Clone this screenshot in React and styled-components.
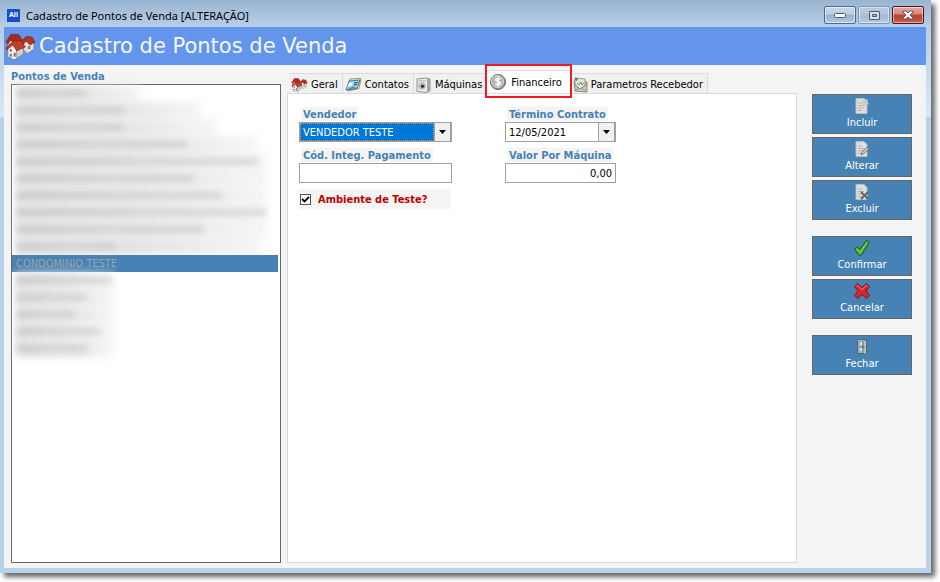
import React, { useState } from 'react';
import styled, { createGlobalStyle } from 'styled-components';

const GlobalStyle = createGlobalStyle`
    * {
        box-sizing: border-box;
    }
    body {
        margin: 0;
        background: #fff;
        font-family: "DejaVu Sans Condensed", "DejaVu Sans", sans-serif;
        font-size: 11px;
        color: #000;
    }
    button, input, select {
        font: inherit;
        margin: 0;
    }
`;

// window frame
const WindowFrame = styled.div`
    display: flex;
    flex-direction: column;
    min-height: calc(100vh - 9px);
    margin: 0 9px 9px 0;
    padding: 0 5px 5px 4px;
    background: linear-gradient(#9ab5d1 0, #b7cfe7 27px, #d9e7f5 117px, #b9d1ea 117px);
    box-shadow: 4px 4px 5px rgba(0, 0, 0, 0.6);
`;

const TitleBar = styled.div`
    display: flex;
    align-items: center;
    height: 27px;
    padding: 3px 2px 0 3px;
    font-family: "Noto Sans", "Open Sans", sans-serif;
    font-size: 11px;
`;

const AppBadge = styled.span`
    width: 13px;
    height: 13px;
    margin-right: 6px;
    background: #1450c8;
    color: #fff;
    font-size: 7px;
    font-weight: 700;
    line-height: 12px;
    text-align: center;
`;

const TitleText = styled.span`
    flex: 1;
`;

const WindowButtons = styled.div`
    display: flex;
    gap: 2px;
`;

const WindowButton = styled.button`
    display: flex;
    align-items: center;
    justify-content: center;
    width: 32px;
    height: 18px;
    padding: 0;
    border: 1px solid ${(props) => (props.$close ? '#4a1420' : props.$soft ? '#8097b3' : '#53698a')};
    border-radius: 2px;
    box-shadow: inset 0 0 0 1px rgba(255, 255, 255, 0.5);
    background: ${(props) =>
        props.$close
            ? 'linear-gradient(#e5aaa0 0, #d68376 45%, #b8402b 50%, #c9604a 100%)'
            : props.$soft
            ? 'linear-gradient(#b6cbe2 0, #b0c7df 45%, #a1bbd8 50%, #b3cbe5 100%)'
            : 'linear-gradient(#c6d8eb 0, #bccfe5 45%, #96b2d2 50%, #b3cde8 100%)'};
`;

const Header = styled.header`
    display: flex;
    align-items: center;
    gap: 3px;
    height: 38px;
    padding-left: 1px;
    background: #6495ed;
`;

const HeaderTitle = styled.h1`
    margin: 0;
    color: #f4f8ff;
    font-family: "DejaVu Sans", sans-serif;
    font-size: 21px;
    font-weight: 400;
    line-height: 24px;
`;

const Body = styled.div`
    display: flex;
    flex: 1;
    padding: 0 14px 5px 7px;
    background: #f4f4f4;
`;

// left list
const Sidebar = styled.section`
    display: flex;
    flex-direction: column;
    width: 270px;
    margin-right: 6px;
`;

const SidebarTitle = styled.h2`
    margin: 0;
    padding-top: 5px;
    height: 19px;
    color: #4682b4;
    font-size: 11px;
    line-height: 14px;
`;

const PointList = styled.ul`
    flex: 1;
    margin: 0;
    padding: 0 2px 0 0;
    border: 1px solid #666;
    background: #fff;
    list-style: none;
`;

const PointItem = styled.li`
    height: 17px;
    padding-left: 4px;
    line-height: 17px;
    color: #a0a0a4;
`;

// stays above the haze of the rows next to it
const SelectedItem = styled(PointItem)`
    position: relative;
    background: #4682b4;
`;

const Haze = styled.div`
    height: 17px;
    width: ${(props) => props.$w}px;
    max-width: 100%;
    background: linear-gradient(to right, #dcdcdc 0, #e2e2e2 50%, rgba(236, 236, 236, 0.5) 100%);
    filter: blur(4px);
`;

const HazeText = styled.div`
    height: 7px;
    width: ${(props) => props.$w}px;
    margin-top: -12px;
    background: linear-gradient(to right, #bbb, #c4c4c4 40%, #ccc 50%, #bdbdbd);
    filter: blur(3px);
    opacity: 0.5;
`;

// tabs
const Main = styled.main`
    display: flex;
    flex: 1;
    flex-direction: column;
    min-width: 0;
    margin-right: 15px;
`;

const Tabs = styled.div`
    display: flex;
    align-items: flex-end;
    height: 28px;
    padding-left: 2px;
`;

const Tab = styled.button`
    display: flex;
    align-items: center;
    gap: 3px;
    height: 20px;
    padding: 2px 4px 0 2px;
    border: 0;
    border-top: 1px solid #dcdcdc;
    border-right: 1px solid #dcdcdc;
    background: #f0f0f0;
    color: #000;
    white-space: nowrap;
`;

const ActiveTab = styled(Tab)`
    position: relative;
    gap: 4px;
    height: 23px;
    padding: 0 8px 0 2px;
    background: #fff;

    &::after {
        content: "";
        position: absolute;
        inset: -7px -2px -5px -2px;
        border: 2px solid #ed1c24;
    }
`;

const Panel = styled.div`
    flex: 1;
    padding: 13px 11px;
    border: 1px solid #d9d9d9;
    background: #fff;
`;

// form
const Form = styled.form`
    display: grid;
    grid-template-columns: 153px 111px;
    column-gap: 53px;
    row-gap: 6px;
`;

const Label = styled.label`
    display: block;
    width: max-content;
    height: 15px;
    margin-left: 2px;
    padding: 0 2px;
    background: linear-gradient(#f4f4f4 14px, #fff 14px);
    color: #4682b4;
    font-weight: 700;
    line-height: 16px;
    white-space: nowrap;
`;

const Combo = styled.div`
    display: flex;
    height: 20px;
    border: 1px solid #a0a0a0;
    background: #fff;
`;

const Select = styled.select`
    flex: 1;
    min-width: 0;
    padding: 0 2px;
    appearance: none;
    border: 1px dotted #e8963c;
    border-radius: 0;
    outline: 0;
    background: #0078d7;
    color: #fff;
`;

const DateInput = styled.input`
    flex: 1;
    min-width: 0;
    padding: 0 3px;
    border: 0;
    background: transparent;
`;

const ArrowButton = styled.button`
    display: flex;
    align-items: center;
    justify-content: center;
    width: 17px;
    padding: 0;
    border: 1px solid #a0a0a0;
    border-width: 0 1px 0 1px;
    background: #f0f0f0;
`;

const TextInput = styled.input`
    display: block;
    width: 100%;
    height: 20px;
    padding: 0 3px;
    border: 1px solid #a0a0a0;
    background: #fff;
    text-align: ${(props) => (props.$right ? 'right' : 'left')};
`;

const CheckRow = styled.label`
    display: flex;
    align-items: center;
    gap: 7px;
    height: 20px;
    margin-right: 2px;
    padding-left: 1px;
    background: #f4f4f4;
    color: #c00000;
    font-weight: 700;
    white-space: nowrap;
`;

const CheckBox = styled.input`
    width: 11px;
    height: 11px;
    appearance: none;
    border: 1px solid #555;
    background: #fff;

    &:checked {
        background: #fff url("data:image/svg+xml,%3Csvg xmlns='http://www.w3.org/2000/svg' viewBox='0 0 9 9'%3E%3Cpath d='M1 4l2.500 2.500L8 2' fill='none' stroke='black' stroke-width='1.800'/%3E%3C/svg%3E");
    }
`;

// right buttons
const Actions = styled.aside`
    display: flex;
    flex-direction: column;
    gap: 16px;
    width: 100px;
    padding-top: 29px;
`;

const ActionGroup = styled.div`
    display: flex;
    flex-direction: column;
    gap: 3px;
`;

const ActionButton = styled.button`
    display: flex;
    flex-direction: column;
    align-items: center;
    gap: 2px;
    height: 40px;
    padding: 3px 0 0;
    border: 1px solid #666;
    background: #4682b4;
    color: #fff;
    line-height: 14px;
`;

const HousesIcon = ({ width, height }) => (
    <svg width={width} height={height} viewBox="0 0 32 27">
        <path d="M3 7l9 1 5 3v7l-8 3-6-3z" fill="#ece8e2" stroke="#77665c" strokeWidth=".6" />
        <path d="M1 9l5-8 8 0 4 6-7 4-5-4-3 4z" fill="#a82c1c" stroke="#5c1a12" strokeWidth=".6" />
        <path d="M19 9l5-5 6 6v6l-7 5-4-4z" fill="#e2ddd7" stroke="#77665c" strokeWidth=".6" />
        <path d="M17 8l5-5 6 1 3 5-5 3-4-4-3 3z" fill="#b63322" stroke="#5c1a12" strokeWidth=".6" />
        <path d="M3 14l5-4 5 7v9l-4 1-6-3z" fill="#f6f4f0" stroke="#77665c" strokeWidth=".6" />
        <path d="M12 17l7-3v7l-7 5z" fill="#d8d0c8" stroke="#77665c" strokeWidth=".6" />
        <path d="M1 15l7-7 8-1 5 7-9 4-4-6-6 5z" fill="#c53d28" stroke="#651b12" strokeWidth=".6" />
        <path d="M5 16h2v3H5zM5 21h2v3H5zM9 20h2v4H9zM24 13h2v3h-2z" fill="#6b6b72" />
    </svg>
);

const ContactsIcon = () => (
    <svg width="17" height="16" viewBox="0 0 17 16">
        <path d="M5 2l11-.500-2 10L3 14z" fill="#f5eccb" stroke="#8c7b4b" strokeWidth=".8" />
        <path d="M4 4l11-1-3 8.500L1 13z" fill="#9fd0ea" stroke="#315d82" strokeWidth=".8" />
        <path d="M4 6l4-.500-1.500 3.500-4 .500z" fill="#eef8fd" />
        <path d="M9 6l4-.500M8.500 8l3.500-.500" stroke="#244c74" />
        <path d="M1.500 12.500L8 9.500l4 1.500z" fill="#5585ad" />
    </svg>
);

const MachineIcon = () => (
    <svg width="16" height="16" viewBox="0 0 16 16">
        <path d="M1 2l9-1 4 1v12l-4 1.500-9-1z" fill="#eee" stroke="#777" strokeWidth=".8" />
        <path d="M11 1.500l3 1v11l-3 1.500z" fill="#a6a6a6" />
        <path d="M2 4h8" stroke="#aaa" />
        <circle cx="6" cy="9" r="3.200" fill="#c8d7e2" stroke="#999" strokeWidth=".8" />
        <circle cx="6.500" cy="9.200" r="1.800" fill="#2e3640" />
    </svg>
);

const CoinIcon = () => (
    <svg width="18" height="18" viewBox="0 0 18 18">
        <circle cx="9" cy="9" r="7.500" fill="#8f8f8f" stroke="#6a6a6a" />
        <circle cx="8.500" cy="8.500" r="6" fill="#b4b4b4" stroke="#dedede" />
        <path d="M11.500 6.500c-1-2-5-1.500-5 .300s5 1.400 5 3.300-4 2.400-5 .400M9 3.500v10" fill="none" stroke="#fff" strokeWidth="1.500" />
    </svg>
);

const EnvelopeIcon = () => (
    <svg width="15" height="16" viewBox="0 0 15 16">
        <path d="M1 4l13 1v10L2 14z" fill="#c9c9c3" stroke="#74746c" strokeWidth=".8" />
        <path d="M2 1l10 1v7l-5 3-5-4z" fill="#e6e8db" stroke="#83857a" strokeWidth=".8" />
        <path d="M2 1h3L4 4 2 3z" fill="#6d7468" />
        <path d="M4 6l2 2 2-3 1 3 2-2" fill="none" stroke="#6f8f5b" />
        <path d="M1 7l6 5 7-5M2 14l4-4M14 15l-5-4" fill="none" stroke="#8a8a82" strokeWidth=".8" />
    </svg>
);

const DocIcon = ({ mark }) => (
    <svg width="16" height="16" viewBox="0 0 16 16">
        <path d="M2 .500h8l3 3v12H2z" fill="#dedede" stroke="#b8bdc0" />
        <path d="M4 5h4M4 7.500h6M4 10h6M4 12.500h4" stroke="#b4b4b4" />
        {mark === 'new' && <path d="M10 0l1 2 3-1-1 3 2 1-2 2v2l-3-2-2 1 1-3-2-2 3-1z" fill="#c8cccd" />}
        {mark === 'edit' && <path d="M7 14l1-3 5-5 2 2-6 5z" fill="#c9c9c9" stroke="#666" strokeWidth=".8" />}
        {mark === 'delete' && <path d="M7 8l7 7M14 8l-7 7" stroke="#666" strokeWidth="2" />}
    </svg>
);

const CheckIcon = () => (
    <svg width="16" height="16" viewBox="0 0 16 16">
        <path d="M.500 9L3.500 7 6 9.500 12.500.500 15.500 2 7 15.500H5.500z" fill="#55b52a" stroke="#1c5a16" />
        <path d="M2.500 9L6 12.500 13 2.500" fill="none" stroke="#8fdc58" />
    </svg>
);

const CrossIcon = () => (
    <svg width="16" height="16" viewBox="0 0 16 16">
        <path d="M3.500.500L8 4.500 12.500.500l3 3L12 8l3.500 4.500-3 3L8 11.500l-4.500 4-3-3L4 8 .500 3.500z" fill="#d9252b" stroke="#821319" />
        <path d="M2.500 3.500l1-1L8 6.500l4.500-4 1 1" fill="none" stroke="#f27676" />
    </svg>
);

const DoorIcon = () => (
    <svg width="16" height="16" viewBox="0 0 16 16">
        <path d="M3.500.500h9v14h-9z" fill="#e4edf2" stroke="#56646e" />
        <path d="M4 1h6.500v13H4z" fill="#a4bccb" />
        <path d="M5 2.500h3.500V7H5zM5 8.500h3.500V13H5z" fill="#cfdde6" stroke="#6f8795" strokeWidth=".7" />
        <path d="M10 1l2 1v13.500L10 14z" fill="#f2f6f8" stroke="#56646e" strokeWidth=".7" />
        <path d="M8.500 8h2" stroke="#333" />
    </svg>
);

const ArrowIcon = () => (
    <svg width="7" height="4" viewBox="0 0 7 4">
        <path d="M0 0h7L3.500 4z" fill="#000" />
    </svg>
);

const hiddenBefore = [
    { haze: 125, text: 68 },
    { haze: 185, text: 108 },
    { haze: 200, text: 106 },
    { haze: 240, text: 170 },
    { haze: 250, text: 242 },
    { haze: 250, text: 178 },
    { haze: 250, text: 206 },
    { haze: 252, text: 250 },
    { haze: 250, text: 188 },
    { haze: 245, text: 100 },
];

const hiddenAfter = [
    { haze: 98, text: 96 },
    { haze: 98, text: 70 },
    { haze: 98, text: 58 },
    { haze: 98, text: 84 },
    { haze: 98, text: 72 },
];

const HiddenItem = ({ item }) => (
    <PointItem>
        <Haze $w={item.haze} />
        <HazeText $w={item.text} />
    </PointItem>
);

const App = () => {
    const [vendor, setVendor] = useState('VENDEDOR TESTE');
    const [endDate, setEndDate] = useState('12/05/2021');
    const [code, setCode] = useState('');
    const [value, setValue] = useState('0,00');
    const [isTest, setIsTest] = useState(true);

    return (
        <>
            <GlobalStyle />
            <WindowFrame>
                <TitleBar>
                    <AppBadge>All</AppBadge>
                    <TitleText>Cadastro de Pontos de Venda [ALTERAÇÃO]</TitleText>
                    <WindowButtons>
                        <WindowButton aria-label="Minimizar">
                            <svg width="12" height="6" viewBox="0 0 12 6">
                                <rect x=".500" y="1.500" width="11" height="4" rx="1" fill="#fff" stroke="#555a6c" />
                            </svg>
                        </WindowButton>
                        <WindowButton $soft aria-label="Maximizar">
                            <svg width="11" height="9" viewBox="0 0 11 9">
                                <path d="M.500.500h10v8H.500zM3.500 3.500v2h4v-2z" fill="#dcdfe4" fillRule="evenodd" stroke="#555a6c" />
                            </svg>
                        </WindowButton>
                        <WindowButton $close aria-label="Fechar janela">
                            <svg width="12" height="10" viewBox="0 0 12 10">
                                <path d="M1 1h3l2 2 2-2h3v1L8 5l3 3v1H8L6 7 4 9H1V8l3-3-3-3z" fill="#fff" stroke="#555a6c" />
                            </svg>
                        </WindowButton>
                    </WindowButtons>
                </TitleBar>
                <Header>
                    <HousesIcon width={31} height={27} />
                    <HeaderTitle>Cadastro de Pontos de Venda</HeaderTitle>
                </Header>
                <Body>
                    <Sidebar>
                        <SidebarTitle>Pontos de Venda</SidebarTitle>
                        <PointList>
                            {hiddenBefore.map((item, i) => (
                                <HiddenItem key={i} item={item} />
                            ))}
                            <SelectedItem>CONDOMINIO TESTE</SelectedItem>
                            {hiddenAfter.map((item, i) => (
                                <HiddenItem key={i} item={item} />
                            ))}
                        </PointList>
                    </Sidebar>
                    <Main>
                        <Tabs>
                            <Tab><HousesIcon width={17} height={14} />Geral</Tab>
                            <Tab><ContactsIcon />Contatos</Tab>
                            <Tab><MachineIcon />Máquinas</Tab>
                            <ActiveTab><CoinIcon />Financeiro</ActiveTab>
                            <Tab><EnvelopeIcon />Parametros Recebedor</Tab>
                        </Tabs>
                        <Panel>
                            <Form>
                                <div>
                                    <Label htmlFor="vendor">Vendedor</Label>
                                    <Combo>
                                        <Select id="vendor" value={vendor} onChange={(e) => setVendor(e.target.value)}>
                                            <option>VENDEDOR TESTE</option>
                                        </Select>
                                        <ArrowButton type="button" aria-label="Abrir vendedores"><ArrowIcon /></ArrowButton>
                                    </Combo>
                                </div>
                                <div>
                                    <Label htmlFor="endDate">Término Contrato</Label>
                                    <Combo>
                                        <DateInput id="endDate" value={endDate} onChange={(e) => setEndDate(e.target.value)} />
                                        <ArrowButton type="button" aria-label="Abrir calendário"><ArrowIcon /></ArrowButton>
                                    </Combo>
                                </div>
                                <div>
                                    <Label htmlFor="code">Cód. Integ. Pagamento</Label>
                                    <TextInput id="code" value={code} onChange={(e) => setCode(e.target.value)} />
                                </div>
                                <div>
                                    <Label htmlFor="value">Valor Por Máquina</Label>
                                    <TextInput id="value" $right value={value} onChange={(e) => setValue(e.target.value)} />
                                </div>
                                <CheckRow>
                                    <CheckBox type="checkbox" checked={isTest} onChange={(e) => setIsTest(e.target.checked)} />
                                    Ambiente de Teste?
                                </CheckRow>
                            </Form>
                        </Panel>
                    </Main>
                    <Actions>
                        <ActionGroup>
                            <ActionButton><DocIcon mark="new" />Incluir</ActionButton>
                            <ActionButton><DocIcon mark="edit" />Alterar</ActionButton>
                            <ActionButton><DocIcon mark="delete" />Excluir</ActionButton>
                        </ActionGroup>
                        <ActionGroup>
                            <ActionButton><CheckIcon />Confirmar</ActionButton>
                            <ActionButton><CrossIcon />Cancelar</ActionButton>
                        </ActionGroup>
                        <ActionGroup>
                            <ActionButton><DoorIcon />Fechar</ActionButton>
                        </ActionGroup>
                    </Actions>
                </Body>
            </WindowFrame>
        </>
    );
};

export default App;
